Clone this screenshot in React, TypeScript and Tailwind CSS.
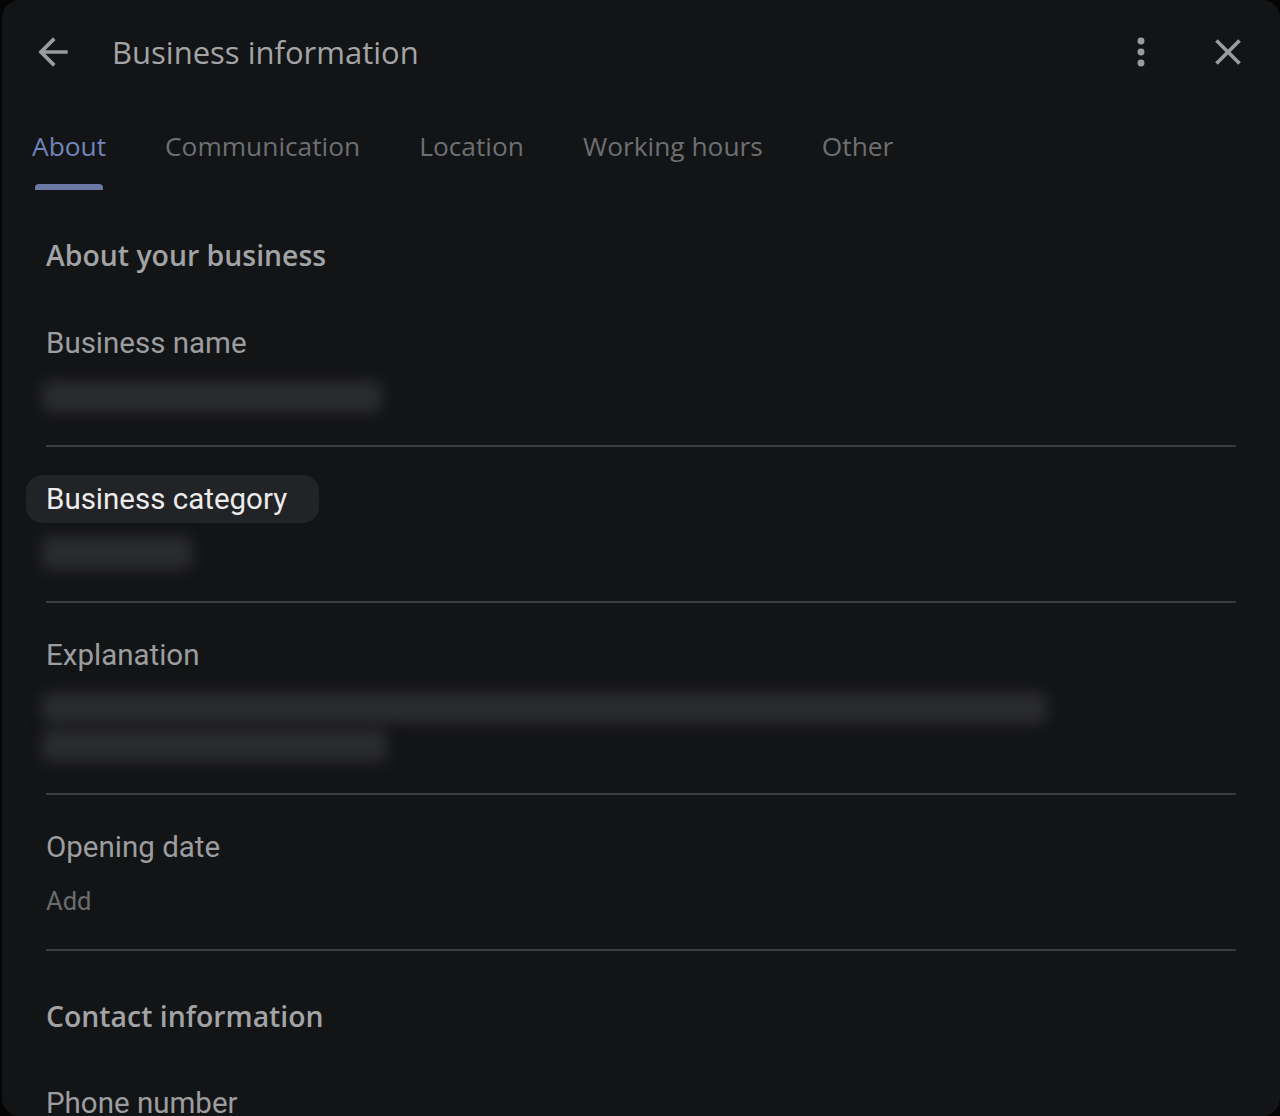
import React from "react";

const tabs = ["About", "Communication", "Location", "Working hours", "Other"];

function BackIcon() {
  return (
    <svg width="44" height="44" viewBox="0 0 24 24" fill="#9a9b9d">
      <path d="M20 11H7.83l5.59-5.59L12 4l-8 8 8 8 1.41-1.41L7.83 13H20v-2z" />
    </svg>
  );
}

function MoreIcon() {
  return (
    <svg width="44" height="44" viewBox="0 0 24 24" fill="#9a9b9d">
      <circle cx="12" cy="6" r="1.9" />
      <circle cx="12" cy="12" r="1.9" />
      <circle cx="12" cy="18" r="1.9" />
    </svg>
  );
}

function CloseIcon() {
  return (
    <svg width="44" height="44" viewBox="0 0 24 24" fill="#9a9b9d">
      <path d="M19 6.41L17.59 5 12 10.59 6.41 5 5 6.41 10.59 12 5 17.59 6.41 19 12 13.41 17.59 19 19 17.59 13.41 12z" />
    </svg>
  );
}

function Blur({ className }: { className: string }) {
  return <div className={"rounded-lg bg-[#2a2b2e] blur-[7px] " + className} />;
}

function Field({
  label,
  highlight,
  children,
}: {
  label: string;
  highlight?: boolean;
  children: React.ReactNode;
}) {
  return (
    <div className="flex flex-col border-b-2 border-[#3a3b3d] pt-[34px] pb-[30px]">
      {highlight ? (
        <div className="-my-[6px] -ml-5 flex h-[48px] w-fit items-center rounded-2xl bg-[#222326] pl-5 pr-8 text-[29.5px] leading-9 text-[#ececec]">
          {label}
        </div>
      ) : (
        <div className="text-[29.5px] leading-9 text-[#9c9d9f]">{label}</div>
      )}
      <div className="mt-[18px]">{children}</div>
    </div>
  );
}

export default function App() {
  return (
    <div className="h-[1116px] w-[1280px] overflow-hidden bg-[#050506] pl-[2px]">
      <div
        className="h-full rounded-[18px] bg-[#131416]"
        style={{ fontFamily: "Roboto, 'Liberation Sans', sans-serif" }}
      >
        <div className="flex h-[104px] items-center pl-[29px] pr-[30px]">
          <BackIcon />
          <div
            className="ml-[37px] text-[31px] text-[#a3a4a6]"
            style={{ fontFamily: "'Open Sans', sans-serif" }}
          >
            Business information
          </div>
          <div className="ml-auto flex items-center gap-[43px]">
            <MoreIcon />
            <CloseIcon />
          </div>
        </div>

        <div
          className="flex h-[86px] gap-[59px] pl-[30px]"
          style={{ fontFamily: "'Open Sans', sans-serif" }}
        >
          {tabs.map((t, i) => (
            <div key={t} className="relative flex flex-col">
              <div
                className={
                  "mt-[24px] text-[26.3px] leading-9 " +
                  (i === 0 ? "text-[#7184bb]" : "text-[#6e6f72]")
                }
              >
                {t}
              </div>
              {i === 0 && (
                <div className="absolute inset-x-[3px] bottom-0 h-[6px] rounded-t-[4px] bg-[#6a79a6]" />
              )}
            </div>
          ))}
        </div>

        <div className="flex flex-col pl-[44px] pr-[44px]">
          <div
            className="mt-[45px] text-[28.4px] font-semibold leading-10 text-[#a2a3a5]"
            style={{ fontFamily: "'Open Sans', sans-serif" }}
          >
            About your business
          </div>
          <div className="mt-[16px]">
            <Field label="Business name">
              <div className="flex h-9 items-center">
                <Blur className="-ml-1 h-[32px] w-[340px]" />
              </div>
            </Field>
            <Field label="Business category" highlight>
              <div className="flex h-9 items-center">
                <Blur className="-ml-1 h-[34px] w-[150px]" />
              </div>
            </Field>
            <Field label="Explanation">
              <div className="flex h-[72px] flex-col justify-center gap-[4px]">
                <Blur className="-ml-1 h-[32px] w-[1005px]" />
                <Blur className="-ml-1 h-[34px] w-[345px]" />
              </div>
            </Field>
            <Field label="Opening date">
              <div className="text-[25.5px] leading-9 text-[#6b6c6e]">Add</div>
            </Field>
          </div>
          <div
            className="mt-[45px] text-[28.4px] font-semibold leading-10 text-[#a2a3a5]"
            style={{ fontFamily: "'Open Sans', sans-serif" }}
          >
            Contact information
          </div>
          <div className="mt-[49px] text-[29.5px] leading-9 text-[#9c9d9f]">
            Phone number
          </div>
        </div>
      </div>
    </div>
  );
}
